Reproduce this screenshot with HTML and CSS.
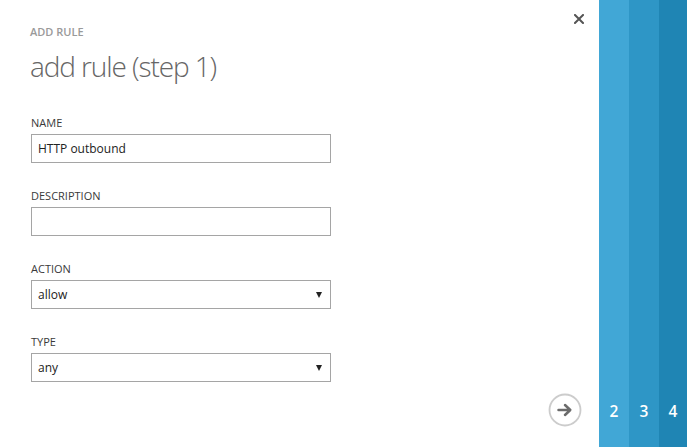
FILE: index.html
```html
<!DOCTYPE html>
<html>
<head>
<meta charset="utf-8">
<link rel="stylesheet" href="styles.css">
</head>
<body>
<div class="dialog">
  <div class="main">
    <div class="header">
      <div class="eyebrow">ADD RULE</div>
      <div class="close">
        <svg width="10" height="10" viewBox="0 0 10 10">
          <path d="M1 1 L9 9 M9 1 L1 9" stroke="#555" stroke-width="2" stroke-linecap="square"/>
        </svg>
      </div>
    </div>
    <h1 class="title">add rule (step 1)</h1>
    <div class="field">
      <div class="label">NAME</div>
      <div class="box">HTTP outbound</div>
    </div>
    <div class="field">
      <div class="label">DESCRIPTION</div>
      <div class="box"></div>
    </div>
    <div class="field">
      <div class="label">ACTION</div>
      <div class="box select">allow<span class="caret"></span></div>
    </div>
    <div class="field last">
      <div class="label">TYPE</div>
      <div class="box select">any<span class="caret"></span></div>
    </div>
    <div class="footer">
      <div class="next">
        <svg width="34" height="34" viewBox="0 0 34 34">
          <circle cx="17" cy="17" r="15.5" fill="none" stroke="#cccccc" stroke-width="1.8"/>
          <path d="M10.5 17 H22 M17 12 L22.3 17 L17 22" fill="none" stroke="#6b6b6b" stroke-width="2.5" stroke-linecap="round" stroke-linejoin="round"/>
        </svg>
      </div>
    </div>
  </div>
  <div class="steps">
    <div class="step s2"><span>2</span></div>
    <div class="step s3"><span>3</span></div>
    <div class="step s4"><span>4</span></div>
  </div>
</div>
</body>
</html>
```
FILE: styles.css
```css
html, body {
  margin: 0;
  padding: 0;
  background: #fff;
  font-family: "Open Sans", "Noto Sans", sans-serif;
}
.dialog {
  display: flex;
  width: 687px;
  height: 447px;
}
.main {
  flex: 1;
  display: flex;
  flex-direction: column;
  padding: 0 15px 0 30px;
}
.main > * {
  flex-shrink: 0;
}
.header {
  display: flex;
  justify-content: space-between;
  align-items: flex-start;
  height: 46px;
}
.eyebrow {
  margin-top: 24px;
  font-size: 11px;
  font-weight: 600;
  color: #9a9a9a;
}
.close {
  margin-top: 14px;
  width: 10px;
  height: 10px;
}
.close svg {
  display: block;
}
.title {
  margin: 0;
  font-size: 28px;
  letter-spacing: -1.1px;
  font-weight: 300;
  color: #666;
  line-height: 40px;
  height: 70px;
}
.field {
  display: flex;
  flex-direction: column;
  margin-left: 1px;
  height: 73px;
}
.field.last {
  height: auto;
}
.label {
  font-size: 11px;
  color: #3a3a3a;
  line-height: 14px;
  height: 18px;
}
.box {
  height: 27px;
  border: 1px solid #a5a5a5;
  font-size: 12px;
  color: #222;
  line-height: 27px;
  padding-left: 6px;
  width: 292px;
  display: flex;
  align-items: center;
}
.select {
  justify-content: space-between;
  padding-right: 8px;
  width: 284px;
}
.caret {
  width: 0;
  height: 0;
  border-left: 3px solid transparent;
  border-right: 3px solid transparent;
  border-top: 6px solid #222;
}
.footer {
  margin-top: auto;
  display: flex;
  justify-content: flex-end;
  padding-bottom: 20px;
}
.next {
  width: 34px;
  height: 34px;
  margin-right: 2px;
}
.next svg {
  display: block;
}
.steps {
  display: flex;
  width: 88px;
}
.step {
  display: flex;
  align-items: flex-end;
  justify-content: center;
  padding-bottom: 25px;
  box-sizing: border-box;
  color: #fff;
  font-size: 15.5px;
  font-weight: 600;
}
.s2 { width: 30px; background: #41a7d6; }
.s3 { width: 30px; background: #2e96c6; }
.s4 { width: 28px; background: #1f85b4; }
```
